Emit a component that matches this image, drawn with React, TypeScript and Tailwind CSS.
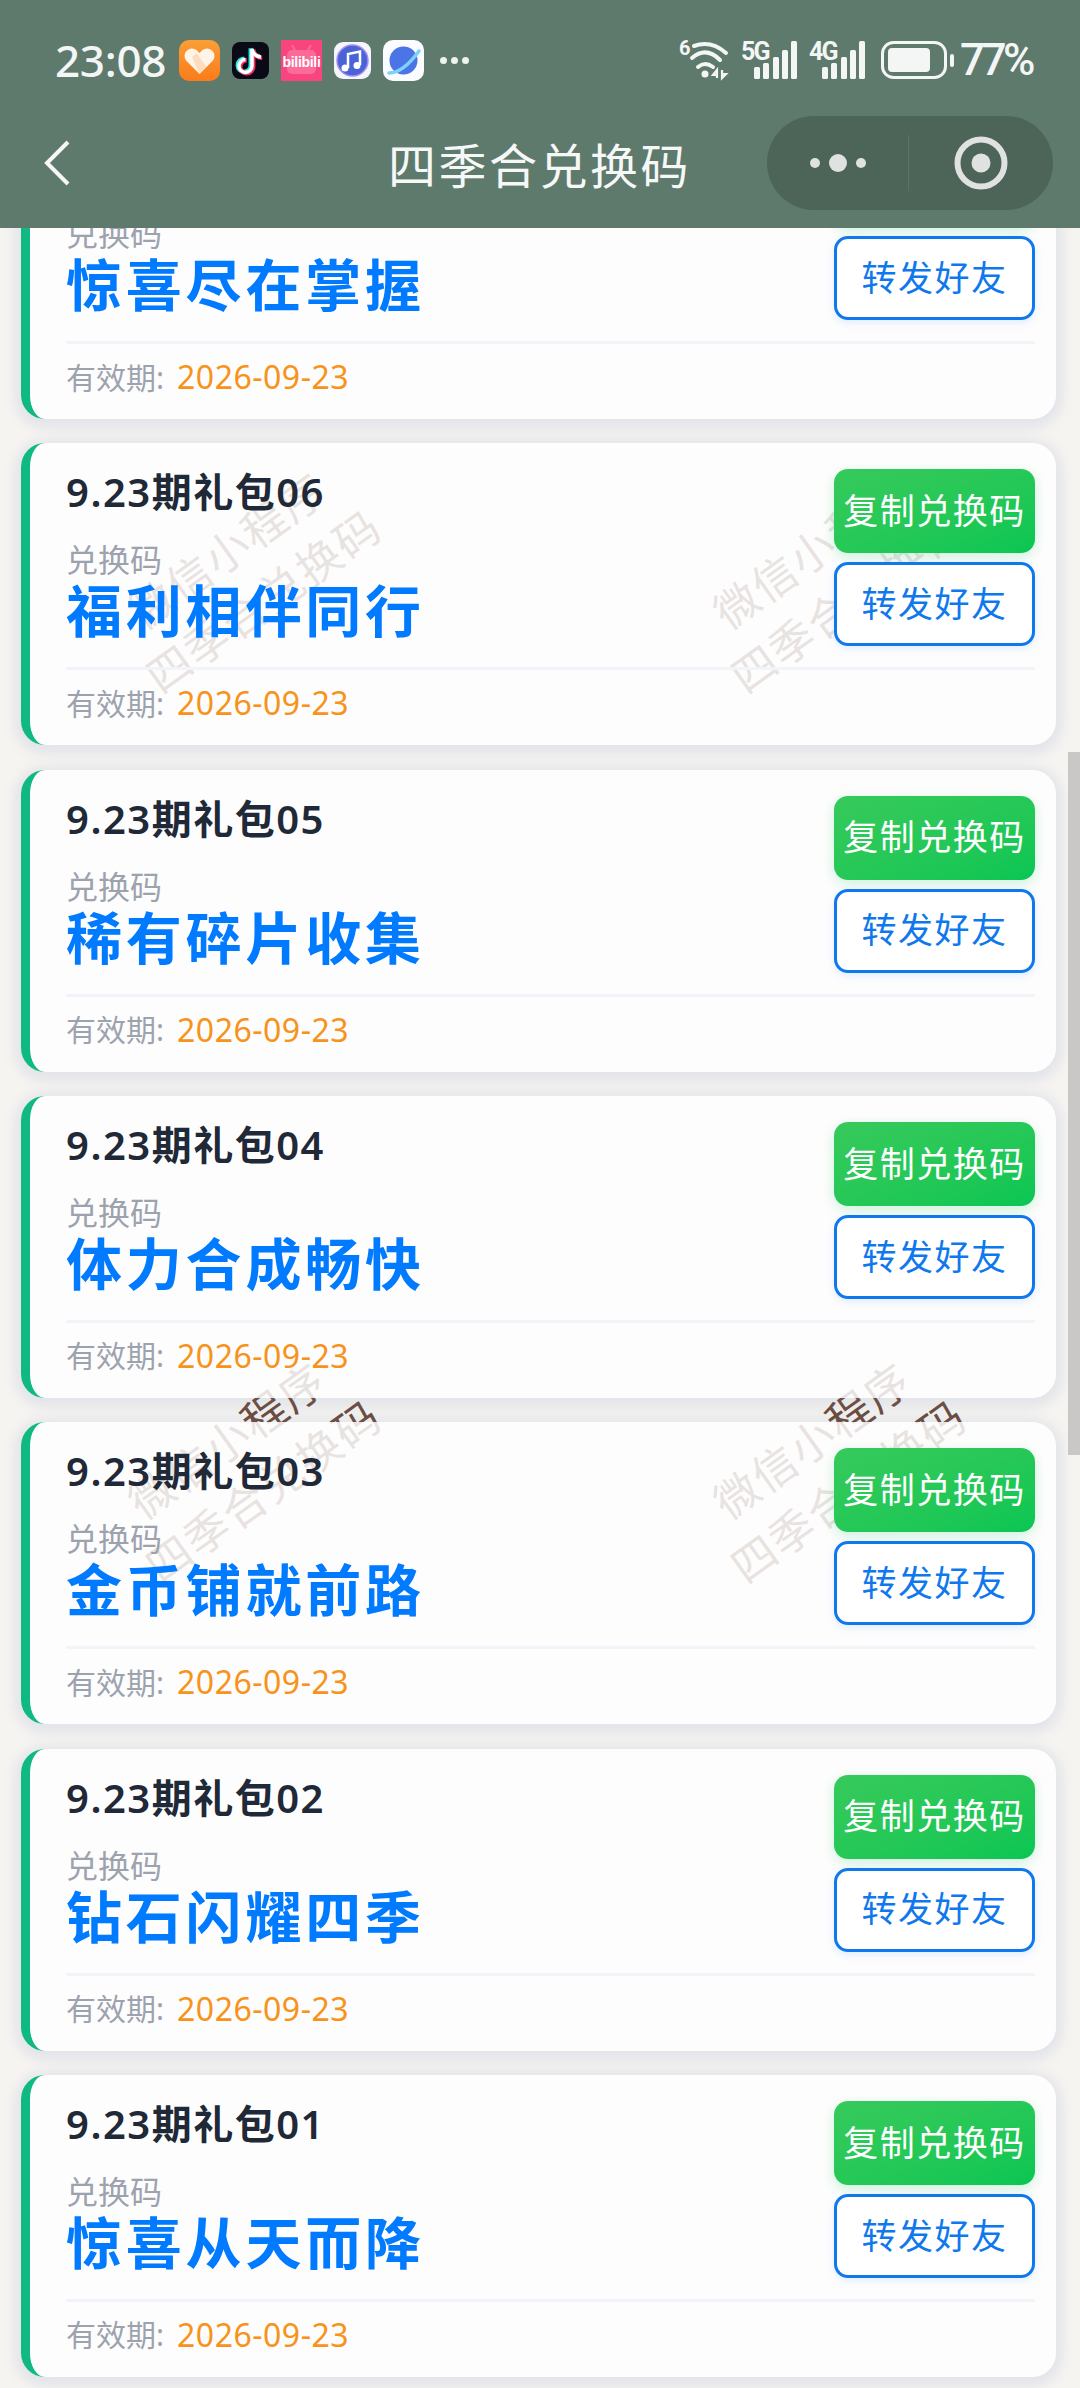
const gifts = [
  { id: "07", code: "惊喜尽在掌握" },
  { id: "06", code: "福利相伴同行" },
  { id: "05", code: "稀有碎片收集" },
  { id: "04", code: "体力合成畅快" },
  { id: "03", code: "金币铺就前路" },
  { id: "02", code: "钻石闪耀四季" },
  { id: "01", code: "惊喜从天而降" },
];

function AppIcons() {
  return (
    <div className="flex items-center h-[42px]">
      {/* orange heart */}
      <svg width="41" height="41" viewBox="0 0 41 41">
        <defs>
          <linearGradient id="og" x1="0" y1="0" x2="0" y2="1">
            <stop offset="0" stopColor="#fa9f36" />
            <stop offset="1" stopColor="#fb7b1a" />
          </linearGradient>
        </defs>
        <rect width="41" height="41" rx="10" fill="url(#og)" />
        <path d="M20.500 34 L7 20.500 a7.500 7.500 0 0 1 10.500 -10.500 L20.500 13 L23.500 10 a7.500 7.500 0 0 1 10.500 10.500 Z" fill="#fff4e8" />
        <path d="M20.500 34 L27.500 27 L17.500 13 L13 17 Z" fill="#fbd7b0" opacity="0.75" />
      </svg>
      {/* tiktok */}
      <svg className="ml-[12px]" width="37" height="37" viewBox="0 0 37 37">
        <rect width="37" height="37" rx="8" fill="#0a0916" />
        <path d="M20 7V24a6.500 6.500 0 1 1-6.500-6.500M20 7C21 12 25 15 29 15" fill="none" stroke="#2de8e6" strokeWidth="4.500" transform="translate(-1.200 -0.800)" />
        <path d="M20 7V24a6.500 6.500 0 1 1-6.500-6.500M20 7C21 12 25 15 29 15" fill="none" stroke="#f0305c" strokeWidth="4.500" transform="translate(1.200 0.800)" />
        <path d="M20 7V24a6.500 6.500 0 1 1-6.500-6.500M20 7C21 12 25 15 29 15" fill="none" stroke="#fff" strokeWidth="3.500" />
      </svg>
      {/* bilibili */}
      <svg className="ml-[12px]" width="41" height="41" viewBox="0 0 41 41">
        <rect width="41" height="41" fill="#f8447f" />
        <rect x="6" y="10" width="29" height="24" rx="5" fill="#fb6b98" />
        <path d="M14 10l-3-5M27 10l3-5" stroke="#fb6b98" strokeWidth="2" />
        <text x="20.500" y="27" textAnchor="middle" fontSize="14" fontWeight="700" fill="#fff" letterSpacing="-0.300" fontFamily="Liberation Sans, sans-serif">bilibili</text>
      </svg>
      {/* music */}
      <svg className="ml-[12px]" width="37" height="37" viewBox="0 0 37 37">
        <rect width="37" height="37" rx="9" fill="#f4f6fb" />
        <circle cx="18.500" cy="18.500" r="15.500" fill="#4a64d8" stroke="#a78cf0" strokeWidth="1.500" />
        <path d="M14 26V12l12-2.500V23" fill="none" stroke="#fff" strokeWidth="2.500" />
        <circle cx="11" cy="26" r="3.500" fill="#fff" />
        <circle cx="23" cy="23.500" r="3.500" fill="#fff" />
      </svg>
      {/* planet */}
      <svg className="ml-[12px]" width="41" height="41" viewBox="0 0 41 41">
        <rect width="41" height="41" rx="10" fill="#fbfcff" />
        <circle cx="20.500" cy="20.500" r="14" fill="#4b74e6" />
        <path d="M6 33 Q20 33 36 11" fill="none" stroke="#7fd0fb" strokeWidth="3.500" strokeLinecap="round" />
      </svg>
      <div className="flex gap-[4px] ml-[16px]">
        <span className="w-[7px] h-[7px] rounded-full bg-[#eef2f0]" />
        <span className="w-[7px] h-[7px] rounded-full bg-[#eef2f0]" />
        <span className="w-[7px] h-[7px] rounded-full bg-[#eef2f0]" />
      </div>
    </div>
  );
}

function Signal({ label }: { label: string }) {
  return (
    <div className="relative w-[56px] h-[38px]">
      <span className="absolute left-0 top-[-2px] text-[25px] leading-[26px] font-bold text-[#f3f6f5] tracking-[-2px] font-['Roboto',sans-serif]">{label}</span>
      <svg className="absolute inset-0" width="56" height="38" viewBox="0 0 56 38" fill="#f3f6f5">
        <rect x="13" y="26" width="6" height="12" rx="1.500" />
        <rect x="22" y="22" width="6" height="16" rx="1.500" />
        <rect x="32" y="16" width="6" height="22" rx="1.500" />
        <rect x="41" y="9" width="6" height="29" rx="1.500" />
        <rect x="50" y="0" width="6" height="38" rx="1.500" />
      </svg>
    </div>
  );
}

function StatusBar() {
  return (
    <div className="flex items-center h-[42px] mt-[39px] pl-[55px] pr-[48px]">
      <span className="w-[124px] text-[44px] leading-[42px] font-medium tracking-[-0.300px] text-[#f3f6f5] font-['Noto_Sans',sans-serif]">23:08</span>
      <AppIcons />
      <div className="flex items-center ml-auto">
        {/* wifi */}
        <svg className="overflow-visible" width="50" height="40" viewBox="0 0 50 40" fill="none" stroke="#f3f6f5" strokeLinecap="round">
          <text x="0" y="15" fontSize="20" fontWeight="700" fill="#f3f6f5" stroke="none" fontFamily="Roboto, sans-serif">6</text>
          <path d="M15 6 Q32 0 47 13" strokeWidth="4" />
          <path d="M13 18 Q27 6 41 20" strokeWidth="4" />
          <path d="M19 27 Q26 21 34 27" strokeWidth="4" />
          <circle cx="26" cy="34" r="3.500" fill="#f3f6f5" stroke="none" />
          <path d="M38 38V30l-4 5h4M43 30v8l4-4h-4" strokeWidth="2.200" strokeLinecap="butt" />
        </svg>
        <div className="ml-[12px]"><Signal label="5G" /></div>
        <div className="ml-[12px]"><Signal label="4G" /></div>
        {/* battery */}
        <svg className="ml-[16px]" width="74" height="38" viewBox="0 0 74 38">
          <rect x="1.500" y="1.500" width="63" height="35" rx="11" fill="none" stroke="#f3f6f5" strokeWidth="3" />
          <rect x="7" y="7" width="42" height="24" rx="4" fill="#f3f6f5" />
          <rect x="69" y="13" width="4" height="13" rx="2" fill="#f3f6f5" />
        </svg>
        <span className="ml-[5px] text-[44px] leading-[42px] font-medium tracking-[-3.500px] text-[#f3f6f5] font-['Roboto',sans-serif]">77%</span>
      </div>
    </div>
  );
}

function NavRow() {
  return (
    <div className="relative flex items-center h-[94px] mt-[35px] pr-[27px]">
      <svg className="ml-[42px]" width="30" height="48" viewBox="0 0 30 48" fill="none" stroke="#f6f8f7" strokeWidth="4">
        <path d="M26 3 L5 24 L26 45" />
      </svg>
      <span className="absolute left-[388px] text-[48px] leading-[60px] tracking-[2.500px] text-[#f6f8f7] font-['Noto_Sans_CJK_SC',sans-serif]">四季合兑换码</span>
      <div className="ml-auto w-[286px] h-[94px] rounded-full bg-[#4d6459] flex items-center">
        <div className="flex items-center justify-center w-[142px] h-[56px] border-r border-[#5b7266]">
          <svg width="60" height="20" viewBox="0 0 60 20" fill="#dfe2e0">
            <circle cx="7" cy="10" r="5" />
            <circle cx="30" cy="10" r="9" />
            <circle cx="53" cy="10" r="5" />
          </svg>
        </div>
        <div className="flex items-center justify-center flex-1">
          <svg width="54" height="54" viewBox="0 0 54 54" fill="none">
            <circle cx="27" cy="27" r="23.500" stroke="#dfe2e0" strokeWidth="6" />
            <circle cx="27" cy="27" r="9.500" fill="#dfe2e0" />
          </svg>
        </div>
      </div>
    </div>
  );
}

function Watermark({ className }: { className: string }) {
  return (
    <div className={`absolute w-[320px] h-[124px] -translate-x-1/2 -translate-y-1/2 -rotate-[35.600deg] flex flex-col items-center justify-center text-[44px] leading-[62px] tracking-[2px] whitespace-nowrap text-[#6d4c3d] font-['Noto_Sans_CJK_SC',sans-serif] ${className}`}>
      <span>微信小程序</span>
      <span>四季合兑换码</span>
    </div>
  );
}

function GiftCard({ id, code }: { id: string; code: string }) {
  return (
    <div className="rounded-[24px] border-l-[9px] border-[#10b981] bg-white/[0.84] shadow-[0_3px_12px_6px_rgba(100,120,185,0.13)] pl-[36px] pr-[21px] pt-[26px] pb-[9px]">
      <div className="flex justify-between h-[177px]">
        <div className="flex flex-col">
          <div className="text-[40px] leading-[45px] font-semibold text-[#1f2937] tracking-[1.500px]">9.23期礼包{id}</div>
          <div className="mt-[28px] text-[32px] leading-[36px] text-[#9ca3af]">兑换码</div>
          <div className="mt-[2px] text-[56px] leading-[60px] font-bold text-[#007aff] tracking-[3.800px]">{code}</div>
        </div>
        <div className="flex flex-col gap-[9px] w-[201px]">
          <button className="h-[84px] rounded-[14px] bg-gradient-to-br from-[#36ca5b] to-[#07c653] text-white text-[35px] tracking-[1.500px] shadow-[0_4px_14px_rgba(7,193,96,0.2)]">复制兑换码</button>
          <button className="h-[84px] rounded-[14px] border-[3px] border-[#0f78ec] bg-white text-[#0f78ec] text-[35px] tracking-[1.500px] shadow-[0_3px_8px_rgba(0,122,255,0.12)]">转发好友</button>
        </div>
      </div>
      <div className="mt-[21px] h-[3px] bg-[#f1f4f8]" />
      <div className="flex items-center h-[66px] text-[30px]">
        <span className="text-[#9ca3af]">有效期:</span>
        <span className="ml-[13px] text-[32px] text-[#f7931a] tracking-[0.500px]">2026-09-23</span>
      </div>
    </div>
  );
}

export default function App() {
  return (
    <div className="relative w-[1080px] h-[2388px] overflow-hidden bg-[#f6f4f1] font-['Noto_Sans','Noto_Sans_CJK_SC',sans-serif]">
      <Watermark className="left-[244px] top-[574px]" />
      <Watermark className="left-[829px] top-[574px]" />
      <Watermark className="left-[244px] top-[1464px]" />
      <Watermark className="left-[829px] top-[1464px]" />

      <header className="relative z-20 h-[228px] bg-[#5e7a6d] flex flex-col">
        <StatusBar />
        <NavRow />
      </header>

      <main className="relative z-10 flex flex-col gap-[24.330px] pl-[21px] pr-[24px] -mt-[111px]">
        {gifts.map((g) => (
          <GiftCard key={g.id} id={g.id} code={g.code} />
        ))}
      </main>

      {/* scrollbar */}
      <div className="absolute z-10 right-0 top-[752px] w-[12px] h-[703px] bg-[#c9c8c7]" />
    </div>
  );
}
